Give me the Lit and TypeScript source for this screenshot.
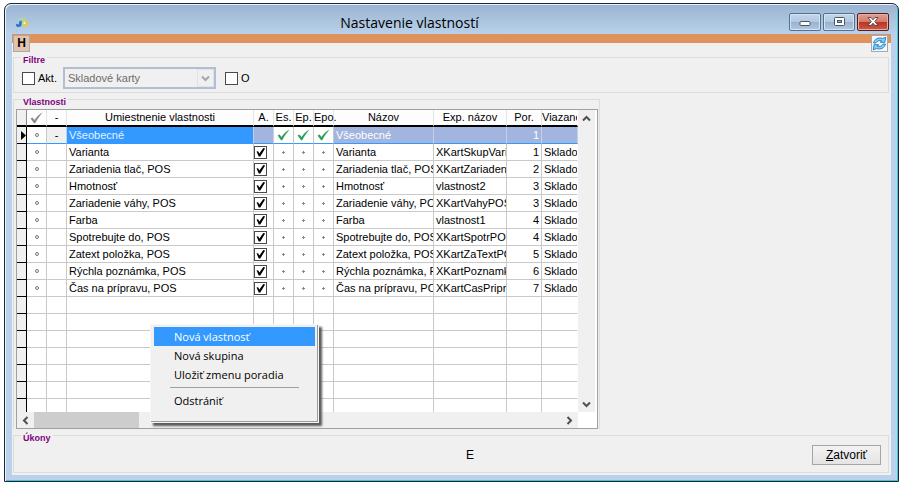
import { LitElement, html, svg, css, nothing } from "lit";
import { customElement, state } from "lit/decorators.js";
import { classMap } from "lit/directives/class-map.js";

interface Row {
  name: string;
  exp: string;
  order: number;
  group?: boolean;
}

const ROWS: Row[] = [
  { name: "Všeobecné", exp: "", order: 1, group: true },
  { name: "Varianta", exp: "XKartSkupVarianta", order: 1 },
  { name: "Zariadenia tlač, POS", exp: "XKartZariadenia", order: 2 },
  { name: "Hmotnosť", exp: "vlastnost2", order: 3 },
  { name: "Zariadenie váhy, POS", exp: "XKartVahyPOS", order: 3 },
  { name: "Farba", exp: "vlastnost1", order: 4 },
  { name: "Spotrebujte do, POS", exp: "XKartSpotrPOS", order: 4 },
  { name: "Zatext položka, POS", exp: "XKartZaTextPOS", order: 5 },
  { name: "Rýchla poznámka, POS", exp: "XKartPoznamka", order: 6 },
  { name: "Čas na prípravu, POS", exp: "XKartCasPriprava", order: 7 },
];

const EMPTY_ROWS = [0, 1, 2, 3, 4, 5, 6];
const MENU = ["Nová vlastnosť", "Nová skupina", "Uložiť zmenu poradia"];

const chevron = (d: string) => html`
  <svg class="chev" viewBox="0 0 9 9" aria-hidden="true">
    ${svg`<path d=${d} fill="none" stroke="#505050" stroke-width="2" />`}
  </svg>
`;

const tick = (color: string) => html`
  <svg class="tick" viewBox="0 0 13 12" aria-hidden="true">
    ${svg`<path d="M0.6 6.6 L2.4 5.4 L4.6 8 C6.6 5 9 2.4 12.6 0.5 C9.8 3.6 7.4 7 5.2 11.2 L4 11.2 Z" fill=${color} />`}
  </svg>
`;

@customElement("app-root")
export class AppRoot extends LitElement {
  @state() private activeItem = 0;

  static styles = css`
    :host {
      display: block;
      box-sizing: border-box;
      height: 100vh;
      padding: 3px 4px 4px 4px;
      background: #fff;
      color: #000;
      font: 11px/16px "Liberation Sans", Arial, sans-serif;
    }
    *, *::before, *::after { box-sizing: border-box; }
    button, input, select { font: inherit; color: inherit; margin: 0; padding: 0; border-radius: 0; }

    .window {
      display: flex;
      flex-direction: column;
      height: 100%;
      border: 1px solid #1c2733;
      border-radius: 7px 7px 0 0;
      padding: 0 7px 6px 7px;
      background: linear-gradient(#99b4d1, #b9d1ea 30px);
      box-shadow: inset 1px 1px #eaf2fb, inset -1px -1px #45c3dc;
    }
    .caption { display: flex; align-items: flex-start; height: 30px; padding: 9px 2px 0 3px; flex: none; }
    .logo { width: 15px; height: 14px; margin-top: 2px; }
    .title {
      flex: 1;
      margin: 0;
      text-align: center;
      font: 14px/20px "Open Sans", "Noto Sans", sans-serif;
    }
    .winbtns { display: flex; gap: 2px; }
    .winbtn {
      display: grid;
      place-items: center;
      width: 32px;
      height: 18px;
      border: 1px solid #55708f;
      border-radius: 2px;
      background: linear-gradient(#c3d6ea, #b3c9e0 48%, #97b1cd 50%, #b0cae6);
      box-shadow: inset 0 0 0 1px #d5e4f3;
    }
    .winbtn.close {
      border-color: #5b1a1a;
      background: linear-gradient(#e0a193, #d47a68 48%, #b8321f 50%, #cf5a48);
      box-shadow: inset 0 0 0 1px #e6aea3;
    }
    .winbtn svg { width: 14px; height: 12px; }

    .client {
      position: relative;
      flex: 1;
      min-height: 0;
      display: flex;
      flex-direction: column;
      gap: 2px;
      padding: 0 2px 2px 1px;
      background: #f0f0f0;
    }
    .strip { flex: none; height: 9px; margin: 0 -2px 8px -1px; background: #de935c; }
    .corner { position: absolute; top: 1px; width: 17px; height: 17px; border: 1px solid #a9a9a9; }
    .help { left: 1px; background: #e3c3ae; font-weight: bold; font-size: 12px; line-height: 15px; }
    .reload { right: 3px; background: #f4f8fc; display: grid; place-items: center; }
    .reload svg { width: 15px; height: 15px; }

    fieldset { margin: 0; min-width: 0; padding: 6px 3px 0 2px; border: 1px solid #dcdcdc; }
    legend {
      height: 8px;
      margin-left: 5px;
      padding: 0 2px;
      color: #800080;
      font-size: 9px;
      font-weight: bold;
      line-height: 15px;
    }

    .filters { padding-bottom: 3px; flex: none; }
    .filterrow { display: flex; align-items: center; height: 22px; padding-left: 6px; }
    .opt { display: flex; align-items: center; gap: 3px; height: 18px; }
    .opt.first { margin-right: 6px; }
    .opt.second { margin-left: 9px; }
    .box {
      appearance: none;
      display: block;
      flex: none;
      width: 13px;
      height: 13px;
      border: 1px solid #4a4a4a;
      background: #fff;
    }
    .box:checked::before {
      content: "";
      display: block;
      width: 11px;
      height: 11px;
      background: #000;
      clip-path: polygon(14% 42%, 28% 38%, 40% 58%, 76% 10%, 92% 14%, 48% 86%, 34% 86%);
    }
    .combo { position: relative; width: 153px; height: 22px; }
    .combo select {
      appearance: none;
      width: 100%;
      height: 100%;
      padding-left: 3px;
      border: 2px solid #b2bfd2;
      background: #f0f0f0;
      color: #6d6d6d;
      opacity: 1;
    }
    .arrow {
      position: absolute;
      top: 2px;
      right: 2px;
      display: grid;
      place-items: center;
      width: 17px;
      height: 18px;
      border: 1px solid #dfe4ea;
      pointer-events: none;
    }
    .arrow svg { width: 9px; height: 9px; opacity: 0.45; }

    .props { position: relative; flex: 1; min-height: 0; display: flex; width: 587px; padding-right: 1px; border-bottom: 0; }
    .grid {
      flex: 1;
      min-width: 0;
      min-height: 0;
      display: grid;
      grid-template-columns: 1fr 17px;
      grid-template-rows: 1fr 16px;
      border: 1px solid #a0a0a0;
      padding-right: 2px;
      background: #fff;
    }
    .view { overflow: hidden; min-height: 0; }
    table { table-layout: fixed; width: 561px; border-spacing: 0; }
    th, td {
      height: 17px;
      padding: 0 0 0 2px;
      border-right: 1px solid #c9c9c9;
      border-bottom: 1px solid #c9c9c9;
      overflow: hidden;
      white-space: nowrap;
      font-weight: normal;
      text-align: left;
      line-height: 16px;
    }
    thead th { text-align: center; padding: 0; border-right-color: #e2e6ea; border-bottom: 2px solid #000; line-height: 15px; background: #fdfdfd; }
    thead th.clip { text-align: left; }
    thead th.wide { text-align: left; overflow: visible; }
    .mark { padding: 0; border-right: 1px solid #000; border-bottom-color: #000; background: #f0f0f0; }
    thead .mark { background: #f0f0f0; border-right-color: #888; }
    td.mid { text-align: center; padding: 0; }
    td.act { padding: 0; }
    td.num { text-align: right; padding-right: 2px; }
    td.edge, th.edge { border-right-color: #fff; }
    .mark svg { display: block; width: 5px; height: 9px; margin-left: 4px; }
    .dot { display: block; width: 4px; height: 4px; margin: 0 auto; border: 1px solid #777; border-radius: 2px; }
    .plus { display: block; width: 3px; height: 3px; margin: 0 auto; background: linear-gradient(#888, #888) center / 1px 3px no-repeat, linear-gradient(#888, #888) center / 3px 1px no-repeat; }
    td .box { margin: 1px 0 0 0; }
    .tick { display: block; width: 13px; height: 12px; margin: 0 auto; }
    tr.sel td { background: #a2b5df; border-right-color: #c5d0e8; border-bottom-color: #3399ff; color: #fff; }
    tr.sel td.main { background: #3399ff; color: #e4f1ff; }
    tr.sel td.plain { background: #fff; color: #000; border-right-color: #c9c9c9; }
    tr.sel td.grey { background: #f0f0f0; color: #000; }
    tr.sel td.mark { background: #f0f0f0; border-color: #000; }

    .vbar, .hbar { display: flex; justify-content: space-between; background: #f0f0f0; }
    .vbar { flex-direction: column; }
    .sbtn { display: grid; place-items: center; width: 17px; height: 16px; border: 0; background: none; }
    .chev { width: 9px; height: 9px; }
    .thumb { width: 105px; background: #cdcdcd; }
    .hbar .sbtn:last-child { margin-left: auto; }
    .gap { background: #fff; }

    .menu {
      position: absolute;
      left: 136px;
      top: 221px;
      width: 169px;
      height: 99px;
      margin: 0;
      padding: 2px 3px;
      border: 1px solid #f6f6f6;
      background: #f0f0f0;
      box-shadow: inset -1px -1px #9a9a9a, 3px 3px 2px #5c5c5c;
    }
    .item {
      display: block;
      width: 100%;
      height: 19px;
      padding-left: 20px;
      border: 0;
      background: none;
      text-align: left;
      font: 11px/18px "Open Sans", "Noto Sans", sans-serif;
    }
    .item.on { background: #3399ff; color: #fff; }
    .sep { height: 1px; margin: 3px 16px; background: #a0a0a0; }

    .actions { flex: none; padding-bottom: 7px; }
    .actrow { display: flex; align-items: center; padding-right: 4px; }
    .state { flex: 1; padding-left: 112px; text-align: center; font-size: 12px; }
    .shut {
      width: 69px;
      height: 20px;
      border: 1px solid #a5a5a5;
      background: linear-gradient(#f3f3f3, #e4e4e4);
      font-size: 12px;
      line-height: 16px;
    }
  `;

  private renderRow(r: Row) {
    const mark = html`<td class="mark">
      ${r.group ? html`<svg viewBox="0 0 5 9" aria-hidden="true"><path d="M0 0 L5 4.5 L0 9 Z" fill="#000" /></svg>` : nothing}
    </td>`;
    const flag = html`<td class="mid plain">
      ${r.group ? tick("#2f9e58") : html`<span class="plus"></span>`}
    </td>`;
    return html`
      <tr class=${classMap({ sel: !!r.group })}>
        ${mark}
        <td class="mid plain"><span class="dot"></span></td>
        <td class="mid grey">${r.group ? "-" : nothing}</td>
        <td class="main">${r.name}</td>
        <td class="act">
          ${r.group ? nothing : html`<input class="box" type="checkbox" checked aria-label=${"A. " + r.name} />`}
        </td>
        ${flag}${flag}${flag}
        <td>${r.name}</td>
        <td>${r.exp}</td>
        <td class="num">${r.order}</td>
        <td class="edge">${r.group ? "" : "Skladové"}</td>
      </tr>
    `;
  }

  private renderTable() {
    return html`
      <table>
        <colgroup>
          <col width="10" /><col width="20" /><col width="20" /><col width="187" />
          <col width="20" /><col width="20" /><col width="20" /><col width="20" />
          <col width="100" /><col width="73" /><col width="35" /><col width="36" />
        </colgroup>
        <thead>
          <tr>
            <th class="mark"></th>
            <th>${tick("#8a8a8a")}</th>
            <th>-</th>
            <th>Umiestnenie vlastnosti</th>
            <th>A.</th>
            <th>Es.</th>
            <th>Ep.</th>
            <th class="wide">Epo.</th>
            <th>Názov</th>
            <th>Exp. názov</th>
            <th>Por.</th>
            <th class="clip edge">Viazané</th>
          </tr>
        </thead>
        <tbody>
          ${ROWS.map((r) => this.renderRow(r))}
          ${EMPTY_ROWS.map(() => html`
            <tr>
              <td class="mark"></td><td></td><td></td><td></td><td></td><td></td>
              <td></td><td></td><td></td><td></td><td></td><td class="edge"></td>
            </tr>
          `)}
        </tbody>
      </table>
    `;
  }

  render() {
    return html`
      <main class="window">
        <header class="caption">
          <svg class="logo" viewBox="0 0 15 14" aria-hidden="true">
            <path d="M3.5 6 C3.5 3 6 2 10 2.5 L9.5 5.5 L6.5 7 Z" fill="#a3dcb4" />
            <path d="M4.5 6 L6.8 5.5 L6.5 10 C6 12.5 2.5 12.5 1 10.8 L1.2 8.8 L3.8 9.4 Z" fill="#2f74c4" />
            <path d="M8.5 4 L10.5 3.5 L14 10 L12.8 11.8 L7 11.5 L7.5 9.2 Z" fill="#e0c85a" />
            <path d="M9 6 L10.8 9 L8.4 9.2 Z" fill="#f7f5df" />
          </svg>
          <h1 class="title">Nastavenie vlastností</h1>
          <div class="winbtns">
            <button class="winbtn" aria-label="Minimalizovať">
              <svg viewBox="0 0 14 12"><rect x="2" y="5.5" width="10" height="4" rx="1" fill="#fff" stroke="#4a5563" /></svg>
            </button>
            <button class="winbtn" aria-label="Maximalizovať">
              <svg viewBox="0 0 14 12">
                <rect x="2.5" y="1.5" width="10" height="8" rx="1" fill="#fff" stroke="#4a5563" />
                <rect x="5.5" y="4.5" width="4" height="2" fill="#9db6d1" stroke="#4a5563" />
              </svg>
            </button>
            <button class="winbtn close" aria-label="Zavrieť">
              <svg viewBox="0 0 14 12">
                <path d="M2 1.5 H5 L7 3.8 L9 1.5 H12 L8.8 5.5 L12 9.5 H9 L7 7.2 L5 9.5 H2 L5.2 5.5 Z" fill="#fff" stroke="#54404a" stroke-width="0.9" />
              </svg>
            </button>
          </div>
        </header>

        <div class="client">
          <div class="strip"></div>
          <button class="corner help">H</button>
          <button class="corner reload" aria-label="Obnoviť">
            <svg viewBox="0 0 15 15">
              <path d="M1.5 7 C2.5 3 6 1.2 10.5 2.4 L13.8 1.2 L12.8 6.4 L8.2 6.2 L9.8 4.9 C7.4 4 5 4.8 3.8 7 Z" fill="#7fd0f8" stroke="#1769b5" stroke-width="0.8" />
              <path d="M13.5 8 C12.5 12 9 13.8 4.5 12.6 L1.2 13.8 L2.2 8.6 L6.8 8.8 L5.2 10.1 C7.6 11 10 10.2 11.2 8 Z" fill="#7fd0f8" stroke="#1769b5" stroke-width="0.8" />
            </svg>
          </button>

          <fieldset class="filters">
            <legend>Filtre</legend>
            <div class="filterrow">
              <label class="opt first"><input class="box" type="checkbox" />Akt.</label>
              <div class="combo">
                <select disabled aria-label="Typ karty"><option>Skladové karty</option></select>
                <span class="arrow">${chevron("M1 2.5 L4.5 6 L8 2.5")}</span>
              </div>
              <label class="opt second"><input class="box" type="checkbox" />O</label>
            </div>
          </fieldset>

          <fieldset class="props">
            <legend>Vlastnosti</legend>
            <div class="grid">
              <div class="view">${this.renderTable()}</div>
              <div class="vbar">
                <button class="sbtn" aria-label="Hore">${chevron("M1 6.5 L4.5 3 L8 6.5")}</button>
                <button class="sbtn" aria-label="Dole">${chevron("M1 2.5 L4.5 6 L8 2.5")}</button>
              </div>
              <div class="hbar">
                <button class="sbtn" aria-label="Vľavo">${chevron("M6.5 1 L3 4.5 L6.5 8")}</button>
                <div class="thumb"></div>
                <button class="sbtn" aria-label="Vpravo">${chevron("M2.5 1 L6 4.5 L2.5 8")}</button>
              </div>
              <div class="gap"></div>
            </div>
            <div class="menu" role="menu">
              ${MENU.map((m, i) => html`
                <button
                  role="menuitem"
                  class=${classMap({ item: true, on: this.activeItem === i })}
                  @mouseenter=${() => (this.activeItem = i)}
                >${m}</button>
              `)}
              <div class="sep"></div>
              <button
                role="menuitem"
                class=${classMap({ item: true, on: this.activeItem === 3 })}
                @mouseenter=${() => (this.activeItem = 3)}
              >Odstrániť</button>
            </div>
          </fieldset>

          <fieldset class="actions">
            <legend>Úkony</legend>
            <div class="actrow">
              <span class="state">E</span>
              <button class="shut"><u>Z</u>atvoriť</button>
            </div>
          </fieldset>
        </div>
      </main>
    `;
  }
}
